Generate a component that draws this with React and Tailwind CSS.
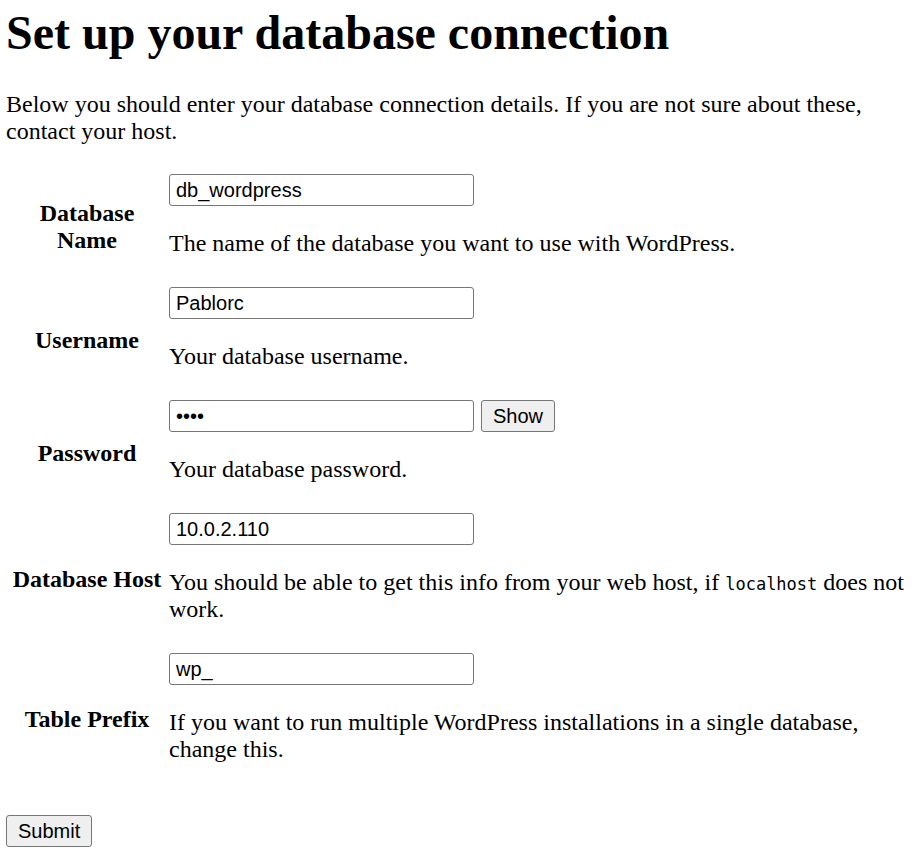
import React from "react";

const inputCls =
  "box-border h-[32px] w-[305px] rounded-[3px] border border-[#767676] bg-white px-[6px] align-middle font-['Liberation_Sans',Arial,sans-serif] text-[20px] leading-[24px] text-black outline-none";

const btnCls =
  "box-border h-[32px] rounded-[3px] border border-[#767676] bg-[#efefef] px-[11px] align-middle font-['Liberation_Sans',Arial,sans-serif] text-[20px] leading-[24px] text-black";

function Row({ label, children, desc }) {
  return (
    <div className="flex">
      <div className="ml-[6px] flex w-[150px] shrink-0 items-center justify-center pb-[3px] text-center text-[24px] font-bold leading-[27px]">
        <label>{label}</label>
      </div>
      <div className="ml-[7px] flex-1 pt-[2px] pb-[28px]">
        <div className="flex h-[32px] items-center gap-[7px]">{children}</div>
        <p className="mt-[24px] text-[24px] leading-[27px]">{desc}</p>
      </div>
    </div>
  );
}

export default function App() {
  return (
    <div className="min-h-[865px] bg-white pl-[6px] pr-[3px] text-black font-['Liberation_Serif','Times_New_Roman',serif]">
      <h1 className="pt-[5px] text-[48px] font-bold leading-[55px]">
        Set up your database connection
      </h1>
      <p className="mt-[31px] text-[24px] leading-[27px]">
        Below you should enter your database connection details. If you are not sure about these, contact your host.
      </p>
      <div className="mt-[27px]">
        <Row label="Database Name" desc="The name of the database you want to use with WordPress.">
          <input className={inputCls} type="text" value="db_wordpress" readOnly />
        </Row>
        <Row label="Username" desc="Your database username.">
          <input className={inputCls} type="text" value="Pablorc" readOnly />
        </Row>
        <Row label="Password" desc="Your database password.">
          <input className={inputCls} type="password" value="abcd" readOnly />
          <button className={btnCls} type="button">Show</button>
        </Row>
        <Row
          label="Database Host"
          desc={
            <>
              You should be able to get this info from your web host, if{" "}
              <code className="font-['DejaVu_Sans_Mono',monospace] text-[17px] leading-none">localhost</code> does not work.
            </>
          }
        >
          <input className={inputCls} type="text" value="10.0.2.110" readOnly />
        </Row>
        <Row
          label="Table Prefix"
          desc="If you want to run multiple WordPress installations in a single database, change this."
        >
          <input className={inputCls} type="text" value="wp_" readOnly />
        </Row>
      </div>
      <div className="mt-[24px]">
        <button className={btnCls} type="button">Submit</button>
      </div>
    </div>
  );
}
